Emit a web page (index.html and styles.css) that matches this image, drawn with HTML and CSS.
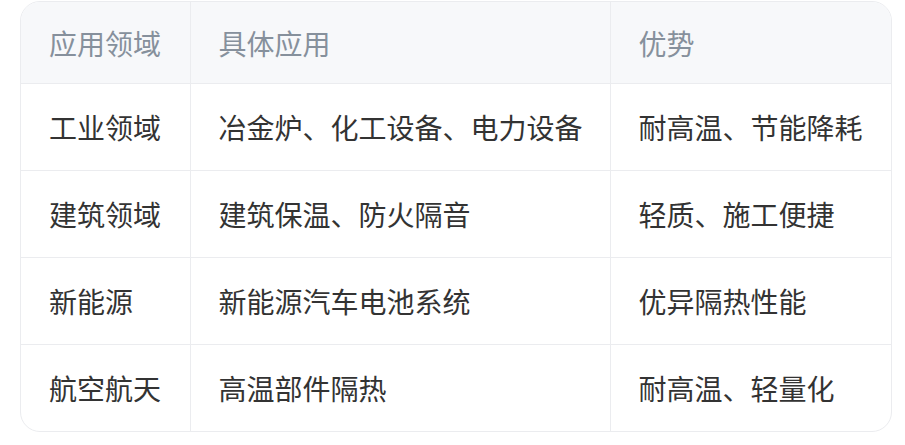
FILE: index.html
```html
<!DOCTYPE html>
<html lang="zh-CN">
<head>
<meta charset="utf-8">
<link rel="stylesheet" href="styles.css">
</head>
<body>
<div class="wrap">
  <div class="card">
    <table class="tbl">
      <colgroup>
        <col class="c1"><col class="c2"><col class="c3">
      </colgroup>
      <thead>
        <tr><th>应用领域</th><th>具体应用</th><th>优势</th></tr>
      </thead>
      <tbody>
        <tr><td>工业领域</td><td>冶金炉、化工设备、电力设备</td><td>耐高温、节能降耗</td></tr>
        <tr><td>建筑领域</td><td>建筑保温、防火隔音</td><td>轻质、施工便捷</td></tr>
        <tr><td>新能源</td><td>新能源汽车电池系统</td><td>优异隔热性能</td></tr>
        <tr><td>航空航天</td><td>高温部件隔热</td><td>耐高温、轻量化</td></tr>
      </tbody>
    </table>
  </div>
</div>
</body>
</html>
```
FILE: styles.css
```css
html, body { margin: 0; padding: 0; background: #fff; }
body { font-family: "Noto Sans CJK SC", "Noto Sans", sans-serif; }
.wrap { padding: 1px 0 0 20px; }
.card {
  width: 870px;
  border: 1px solid #ebecef;
  border-radius: 20px;
  overflow: hidden;
}
.tbl { width: 100%; border-collapse: collapse; table-layout: fixed; }
.c1 { width: 169px; }
.c2 { width: 420px; }
.c3 { width: auto; }
.tbl th, .tbl td {
  font-size: 28px;
  font-weight: 400;
  text-align: left;
  padding: 0 10px 0 28px;
  line-height: 40px;
  white-space: nowrap;
  border-left: 1px solid #ebecef;
  border-top: 1px solid #ebecef;
}
.tbl th:first-child, .tbl td:first-child { border-left: 0; }
.tbl thead th { border-top: 0; background: #f7f8fa; color: #86909c; height: 81px; }
.tbl td { color: #333; height: 86px; }
```
